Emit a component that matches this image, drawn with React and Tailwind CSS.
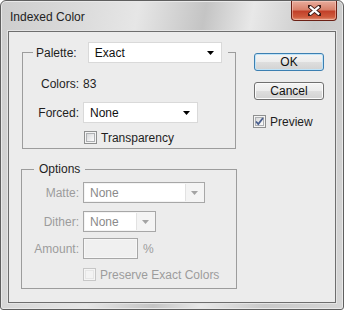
import React from 'react';

// small black / grey drop arrow used by the combo boxes
const Arrow = ({ color = '#000' }) => (
  <svg width="7" height="4" viewBox="0 0 7 4">
    <path d="M0 0h7L3.5 4z" fill={color} />
  </svg>
);

const Combo = ({ value, className }) => (
  <div className={`flex h-[21px] items-center justify-between border border-[#d9d9d9] bg-white pl-[6px] pr-[7px] ${className}`}>
    <span className="text-[#111]">{value}</span>
    <Arrow />
  </div>
);

const DisabledCombo = ({ value, className }) => (
  <div className={`flex h-[21px] border border-[#a7a7a7] bg-[#f4f4f4] p-[1px] ${className}`}>
    <div className="flex flex-1 items-center border-r border-[#e2e2e2] bg-white pl-[5px] text-[#8a8a8a]">{value}</div>
    <div className="flex w-[17px] items-center justify-center">
      <Arrow color="#a3a3a3" />
    </div>
  </div>
);

const Checkbox = ({ checked, disabled }) => (
  <div className={`flex h-[13px] w-[13px] items-center justify-center border ${disabled ? 'border-[#c6c6c6] bg-[#f5f5f5]' : 'border-[#8e8f8f] bg-[#f4f4f4]'}`}>
    <div className={`flex h-[9px] w-[9px] items-center justify-center border ${disabled ? 'border-[#e6e6e6] bg-[#f3f3f3]' : 'border-[#aeb0b3] bg-[linear-gradient(135deg,#d8d9da,#fdfdfd)]'}`}>
      {checked && (
        <svg width="9" height="9" viewBox="0 0 9 9" className="overflow-visible">
          <path d="M1 4.5l2.3 2.6L8 1" fill="none" stroke="#4a5f8f" strokeWidth="1.8" />
        </svg>
      )}
    </div>
  </div>
);

const Button = ({ children, focused }) => (
  <button
    className={`flex h-[18px] w-[70px] items-center justify-center rounded-[3px] border bg-[linear-gradient(#f4f4f4_0%,#ececec_50%,#dedede_51%,#d2d2d2_100%)] text-[#111] ${
      focused
        ? 'border-[#3c7fb1] shadow-[inset_0_0_0_1px_#bfe3f8]'
        : 'border-[#707070] shadow-[inset_0_0_0_1px_#fbfbfb]'
    }`}
  >
    {children}
  </button>
);

export default function App() {
  return (
    <div className="h-[310px] w-[344px] font-['Liberation_Sans',Arial,sans-serif] text-[12px] leading-none text-[#1e1e1e]">
      <div className="flex h-full flex-col rounded-t-[6px] rounded-b-[3px] border border-[#5f5f5f] bg-[linear-gradient(100deg,#cdcdcd_0%,#dcdcdc_22%,#e6e6e6_35%,#c4c4c4_52%,#e8e8e8_64%,#c9c9c9_80%,#d6d6d6_100%)] px-[7px] pb-[6px] shadow-[inset_0_0_0_1px_#e9e9e9]">
        {/* title bar */}
        <div className="-mx-[7px] flex h-[30px] items-start justify-between">
          <span className="ml-[9px] mt-[10px] text-[#222]">Indexed Color</span>
          <div className="mr-[6px] flex h-[20px] w-[46px] items-center justify-center rounded-b-[4px] border border-t-0 border-[#6b2015] bg-[linear-gradient(#e8ac9c_0%,#d9826c_45%,#c2412a_55%,#cf5c3e_85%,#e3977d_100%)] shadow-[inset_0_0_0_1px_rgba(255,220,210,0.45)]">
            <svg width="13" height="11" viewBox="0 0 13 11">
              <path d="M1.5 1.5l10 8M11.5 1.5l-10 8" stroke="#3b1b16" strokeWidth="4" strokeLinecap="square" />
              <path d="M1.8 1.7l9.4 7.6M11.2 1.7l-9.4 7.6" stroke="#fff" strokeWidth="2.2" />
            </svg>
          </div>
        </div>

        {/* client area */}
        <div className="flex h-[272px] w-[328px] border border-[#6e6e6e] bg-[#ececec] pl-[12px] pt-[10px] shadow-[0_0_0_1px_#e4e4e4]">
          <div className="flex w-[216px] flex-col">
            <fieldset className="ml-[1px] w-[214px] border border-[#9c9c9c] pb-[4px]">
              <legend className="ml-[10px] flex items-center pl-[3px] pr-[6px]">
                <span className="mr-[11px]">Palette:</span>
                <Combo value="Exact" className="w-[134px]" />
              </legend>
              <div className="mt-[10px] flex h-[21px] items-center">
                <span className="w-[56px] text-right">Colors:</span>
                <span className="ml-[4px]">83</span>
              </div>
              <div className="mt-[8px] flex items-center">
                <span className="w-[56px] text-right">Forced:</span>
                <Combo value="None" className="ml-[4px] w-[115px]" />
              </div>
              <div className="mt-[8px] flex items-center pl-[61px]">
                <Checkbox />
                <span className="ml-[4px]">Transparency</span>
              </div>
            </fieldset>

            <fieldset className="mt-[14px] w-[216px] border border-[#9c9c9c] pb-[7px] text-[#9c9c9c]">
              <legend className="ml-[12px] px-[5px] text-[#1e1e1e]">Options</legend>
              <div className="mt-[7px] flex items-center">
                <span className="w-[57px] text-right">Matte:</span>
                <DisabledCombo value="None" className="ml-[4px] w-[122px]" />
              </div>
              <div className="mt-[8px] flex items-center">
                <span className="w-[57px] text-right">Dither:</span>
                <DisabledCombo value="None" className="ml-[4px] w-[73px]" />
              </div>
              <div className="mt-[6px] flex items-center">
                <span className="w-[57px] text-right">Amount:</span>
                <div className="ml-[4px] h-[21px] w-[55px] border border-[#a7a7a7] bg-[#f0f0f0] shadow-[inset_0_0_0_1px_#f7f7f7]" />
                <span className="ml-[5px]">%</span>
              </div>
              <div className="mt-[9px] flex items-center pl-[61px]">
                <Checkbox disabled />
                <span className="ml-[4px]">Preserve Exact Colors</span>
              </div>
            </fieldset>
          </div>

          <div className="ml-[17px] flex flex-col pt-[11px]">
            <Button focused>OK</Button>
            <div className="mt-[11px]">
              <Button>Cancel</Button>
            </div>
            <div className="-ml-[1px] mt-[15px] flex items-center">
              <Checkbox checked />
              <span className="ml-[4px]">Preview</span>
            </div>
          </div>
        </div>
      </div>
    </div>
  );
}
